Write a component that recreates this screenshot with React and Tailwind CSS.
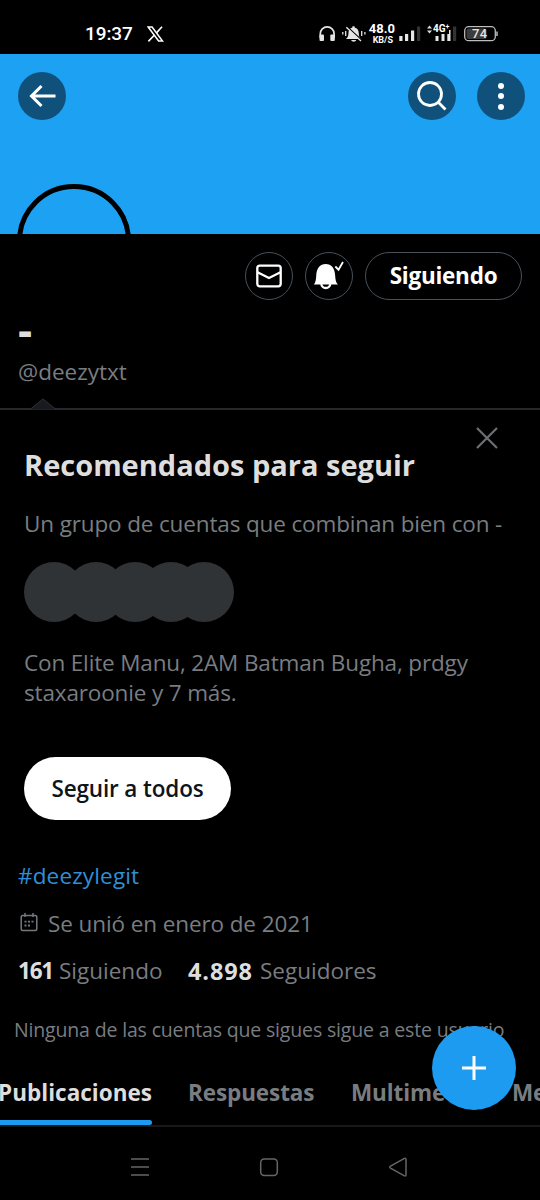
const avatars = ['', '-ml-[18px]', '-ml-[21px]', '-ml-6', '-ml-[27px]'];

function StatusIcons() {
  return (
    <svg width="180" height="28" viewBox="318 20 180 28" className="block">
      {/* headphones */}
      <path d="M320.300 38v-4.200a6.900 6.900 0 0 1 13.800 0V38" fill="none" stroke="#e4e4e4" strokeWidth="1.700" />
      <rect x="319.500" y="34.500" width="4.500" height="6.500" rx="1" fill="#e4e4e4" />
      <rect x="330.300" y="34.500" width="4.500" height="6.500" rx="1" fill="#e4e4e4" />
      {/* muted bell */}
      <path d="M346 39c1.800-1.600 2.400-3 2.400-5.500 0-3.500 1.500-5.500 4-6v-1.300h2.200v1.300c2.700.5 4.200 2.500 4.200 6 0 2.500.4 3.900 2.200 5.500z" fill="#e4e4e4" />
      <path d="M351.200 40h5c-.5 2.300-4.500 2.300-5 0z" fill="#e4e4e4" />
      <path d="M348 27.500L362.500 41" stroke="#000" strokeWidth="1.500" />
      <path d="M346.300 27.200L361 41" stroke="#e4e4e4" strokeWidth="1.400" />
      <path d="M342.800 32v2.500M345.700 31v5M361.700 31v5M364.900 32v2.500" stroke="#e4e4e4" strokeWidth="1.300" />
      {/* signal */}
      <g fill="#e8e8e8">
        <rect x="399.300" y="36" width="3.200" height="5" />
        <rect x="405" y="34" width="3.200" height="7" />
        <rect x="411" y="30.500" width="3.200" height="10.500" />
        <rect x="435.500" y="36" width="3" height="5" />
        <rect x="441.500" y="34" width="3" height="7" />
        <rect x="447.300" y="30" width="3.200" height="11" />
      </g>
      <rect x="417" y="26.500" width="3.200" height="14.500" fill="#333" />
      <rect x="453" y="26.500" width="3.200" height="14.500" fill="#333" />
      <path d="M427 28.500l2.500-3 2.500 3zM427 30.500l2.500 3 2.500-3z" fill="#ddd" />
      {/* battery */}
      <rect x="464.700" y="26.700" width="30.600" height="14" rx="4" fill="none" stroke="#bdbdbd" strokeWidth="1.300" />
      <rect x="466.500" y="28.500" width="20" height="10.400" rx="2" fill="#3c3c3c" />
      <path d="M497 31.500v4.500" stroke="#bdbdbd" strokeWidth="1.500" />
    </svg>
  );
}

function StatusBar() {
  return (
    <header className="flex h-[54px] shrink-0 items-start bg-black pt-5 font-['Roboto',sans-serif]">
      <span className="ml-[85px] w-[61px] text-[19px] leading-7 tracking-[-0.1px] font-medium">19:37</span>
      <svg width="17" height="16" viewBox="0 0 17 16" className="mt-[6px] ml-px block" fill="none" stroke="#fff">
        <path d="M1.200 1h3.900l10.400 14h-3.900z" strokeWidth="1.500" />
        <path d="M15 .7L9.500 6.900M7.200 9.200L1.400 15.400" strokeWidth="1.600" />
      </svg>
      <div className="relative ml-[154px]">
        <StatusIcons />
        <div className="absolute left-[49px] top-[2px] w-7 text-right font-bold">
          <div className="text-[13px] leading-[14px]">48.0</div>
          <div className="pr-[2px] text-[9px] leading-[9px]">KB/S</div>
        </div>
        <span className="absolute left-[115px] top-1 flex bg-black text-[10px] leading-[10px] font-bold">4G<span className="text-[7px] leading-[7px]">+</span></span>
        <span className="absolute left-[154px] top-2 text-[13px] leading-[12px] tracking-[0.3px] font-medium text-neutral-200">74</span>
      </div>
    </header>
  );
}

function Banner() {
  return (
    <div className="relative h-[180px] shrink-0 overflow-hidden bg-[#1da1f2]">
      <div className="flex pl-[18px] pt-[18px]">
        <button className="flex size-12 shrink-0 items-center justify-center rounded-full bg-[#10517b]">
          <svg width="28" height="24" viewBox="0 0 28 24" fill="none" stroke="#fff" strokeWidth="3">
            <path d="M27.500 12H4M13.500 2L3.500 12l10 10" />
          </svg>
        </button>
        <button className="ml-[342px] flex size-12 shrink-0 items-center justify-center rounded-full bg-[#10517b]">
          <svg width="32" height="32" viewBox="0 0 32 32" fill="none" stroke="#fff" strokeWidth="2.800">
            <circle cx="14" cy="14" r="11.500" />
            <path d="M22.300 22.300l7.200 7.200" />
          </svg>
        </button>
        <button className="ml-[21px] flex size-12 shrink-0 flex-col items-center justify-center gap-[4.500px] rounded-full bg-[#10517b]">
          <i className="size-1.5 rounded-full bg-white" />
          <i className="size-1.5 rounded-full bg-white" />
          <i className="size-1.5 rounded-full bg-white" />
        </button>
      </div>
      <div className="absolute left-[17px] top-[129.500px] size-[114px] rounded-full border-[5.500px] border-black" />
    </div>
  );
}

function Actions() {
  return (
    <div className="flex h-[66px] shrink-0 items-end justify-end gap-3 pr-[18px]">
      <button className="flex size-12 items-center justify-center rounded-full border border-[#46525c]">
        <svg width="26" height="24" viewBox="0 0 26 24" fill="none" stroke="#fff" strokeWidth="2.300">
          <rect x="1.300" y="1.700" width="23.400" height="20.600" rx="2.500" />
          <path d="M1.500 8.300L13 14l11.500-5.700" />
        </svg>
      </button>
      <button className="flex size-12 items-center justify-center rounded-full border border-[#46525c]">
        <svg width="32" height="30" viewBox="0 0 32 30" fill="#fff">
          <path d="M.8 23.500c1.700-2 2.200-4.500 2.400-8.500C3.500 7 7 3 12.700 3s9.200 4 9.500 12c.2 4 .8 6.500 2.700 8.500z" />
          <path d="M8.300 22.500a4.500 4.500 0 0 0 9 0" fill="none" stroke="#fff" strokeWidth="2.300" />
          <path d="M22.300 5.500l3.200 3.200L30 1" fill="none" stroke="#fff" strokeWidth="1.800" />
        </svg>
      </button>
      <button className="flex h-12 w-[157px] items-center justify-center rounded-full border border-[#46525c] text-[22.500px] tracking-[-0.250px] font-bold">
        Siguiendo
      </button>
    </div>
  );
}

function Recommended() {
  return (
    <section className="relative flex h-[446px] shrink-0 flex-col border-t-2 border-[#26282a] pl-6">
      <svg width="28" height="12" viewBox="0 0 28 12" className="absolute -top-[12px] left-[29px]">
        <path d="M1 11.500L14 1l13 10.500" fill="#181a1f" stroke="#303236" />
      </svg>
      <svg width="24" height="24" viewBox="0 0 24 24" className="absolute left-[475px] top-4" stroke="#6d6f72" strokeWidth="2.200">
        <path d="M2 2l20 20M22 2L2 22" />
      </svg>
      <h2 className="mt-[35px] h-10 whitespace-nowrap text-[29px] leading-10 font-bold text-[#dedede]">Recomendados para seguir</h2>
      <p className="mt-6 h-[30px] whitespace-nowrap text-[22.500px] leading-[30px] tracking-[-0.140px]">Un grupo de cuentas que combinan bien con -</p>
      <div className="mt-[23px] flex">
        {avatars.map((m, i) => (
          <div key={i} className={`size-[60px] rounded-full bg-[#2f3336] ${m}`} />
        ))}
      </div>
      <p className="mt-[26px] h-[60px] whitespace-nowrap text-[22.500px] leading-[30px] tracking-[-0.150px]">
        Con Elite Manu, 2AM Batman Bugha, prdgy<br />staxaroonie y 7 más.
      </p>
      <button className="mt-[49px] h-[63px] w-[207px] rounded-full bg-white text-[22.500px] tracking-[-0.150px] font-semibold text-[#0f1419]">Seguir a todos</button>
    </section>
  );
}

function Tabs() {
  return (
    <nav className="relative h-[67px] shrink-0 border-b-2 border-[#17191b] text-[22.500px] leading-[66px] tracking-[-0.100px] font-bold">
      <div className="flex overflow-hidden whitespace-nowrap">
        <span className="-ml-0.5 w-[190px] shrink-0 tracking-[0.030px] text-[#dedede]">Publicaciones</span>
        <span className="w-[163px] shrink-0">Respuestas</span>
        <span className="w-[161px] shrink-0">Multimedia</span>
        <span className="shrink-0">Me gusta</span>
      </div>
      <div className="absolute bottom-0 left-0 h-[5px] w-[152px] rounded-r-full bg-[#1d9bf0]" />
    </nav>
  );
}

export default function App() {
  return (
    <div className="relative flex h-[1200px] w-[540px] flex-col overflow-hidden bg-black font-['Open_Sans',sans-serif] text-white">
      <StatusBar />
      <Banner />
      <Actions />
      <main className="flex flex-col text-[#797d81]">
        <h1 className="h-14 pl-[18px] pt-px text-[44px] leading-[56px] font-bold text-[#dedede]">-</h1>
        <p className="h-[52px] pl-[18px] pt-px text-[22.500px] leading-[30px]">@deezytxt</p>
        <Recommended />
        <p className="mt-[7px] h-[30px] shrink-0 pl-[18px] text-[22.500px] leading-[30px] tracking-[0.150px] text-[#2f8fd8]">#deezylegit</p>
        <div className="mt-[18px] flex h-[30px] shrink-0 pl-5 text-[22.500px] leading-[30px] tracking-[-0.100px]">
          <svg width="18" height="19" viewBox="0 0 18 19" className="mt-[4px] mr-[10px]" fill="none" stroke="#75797d" strokeWidth="1.500">
            <rect x="1.200" y="2.500" width="15.600" height="15" rx="1.500" />
            <path d="M5 0v4M13 0v4" />
            <path d="M4.500 8.700h2M8 8.700h2M11.500 8.700h2M4.500 12.500h2M8 12.500h2" strokeWidth="1.800" />
          </svg>
          <span>Se unió en enero de 2021</span>
        </div>
        <div className="mt-[17px] flex h-[30px] shrink-0 pl-[18px] text-[22.500px] leading-[30px]">
          <b className="w-[41px] tracking-[-1.200px] text-[#dedede]">161</b>
          <span className="w-[129px]">Siguiendo</span>
          <b className="w-[72px] text-[23.500px] tracking-[0.900px] text-[#dedede]">4.898</b>
          <span>Seguidores</span>
        </div>
        <p className="mt-[29px] h-[30px] shrink-0 whitespace-nowrap pl-[14px] text-[19.500px] leading-[30px] tracking-[-0.160px]">Ninguna de las cuentas que sigues sigue a este usuario</p>
        <div className="mt-[15px]"><Tabs /></div>
      </main>
      <footer className="flex flex-1 items-start pt-[10px]">
        <svg width="540" height="60" viewBox="0 0 540 60" fill="none" stroke="#666" strokeWidth="1.500">
          <path d="M131 22h18M131 30h18M131 38h18" />
          <rect x="260.700" y="22" width="16.600" height="16.600" rx="3.500" />
          <path d="M390.500 29.200l13.500-7.500q2-1 2 1v15q0 2-2 1l-13.500-7.500q-1.500-1 0-2z" />
        </svg>
      </footer>
      <button className="absolute left-[432px] top-[1026px] flex size-[84px] items-center justify-center rounded-full bg-[#1d9bf0]">
        <svg width="24" height="24" viewBox="0 0 24 24" stroke="#fff" strokeWidth="3">
          <path d="M12 0v24M0 12h24" />
        </svg>
      </button>
    </div>
  );
}
